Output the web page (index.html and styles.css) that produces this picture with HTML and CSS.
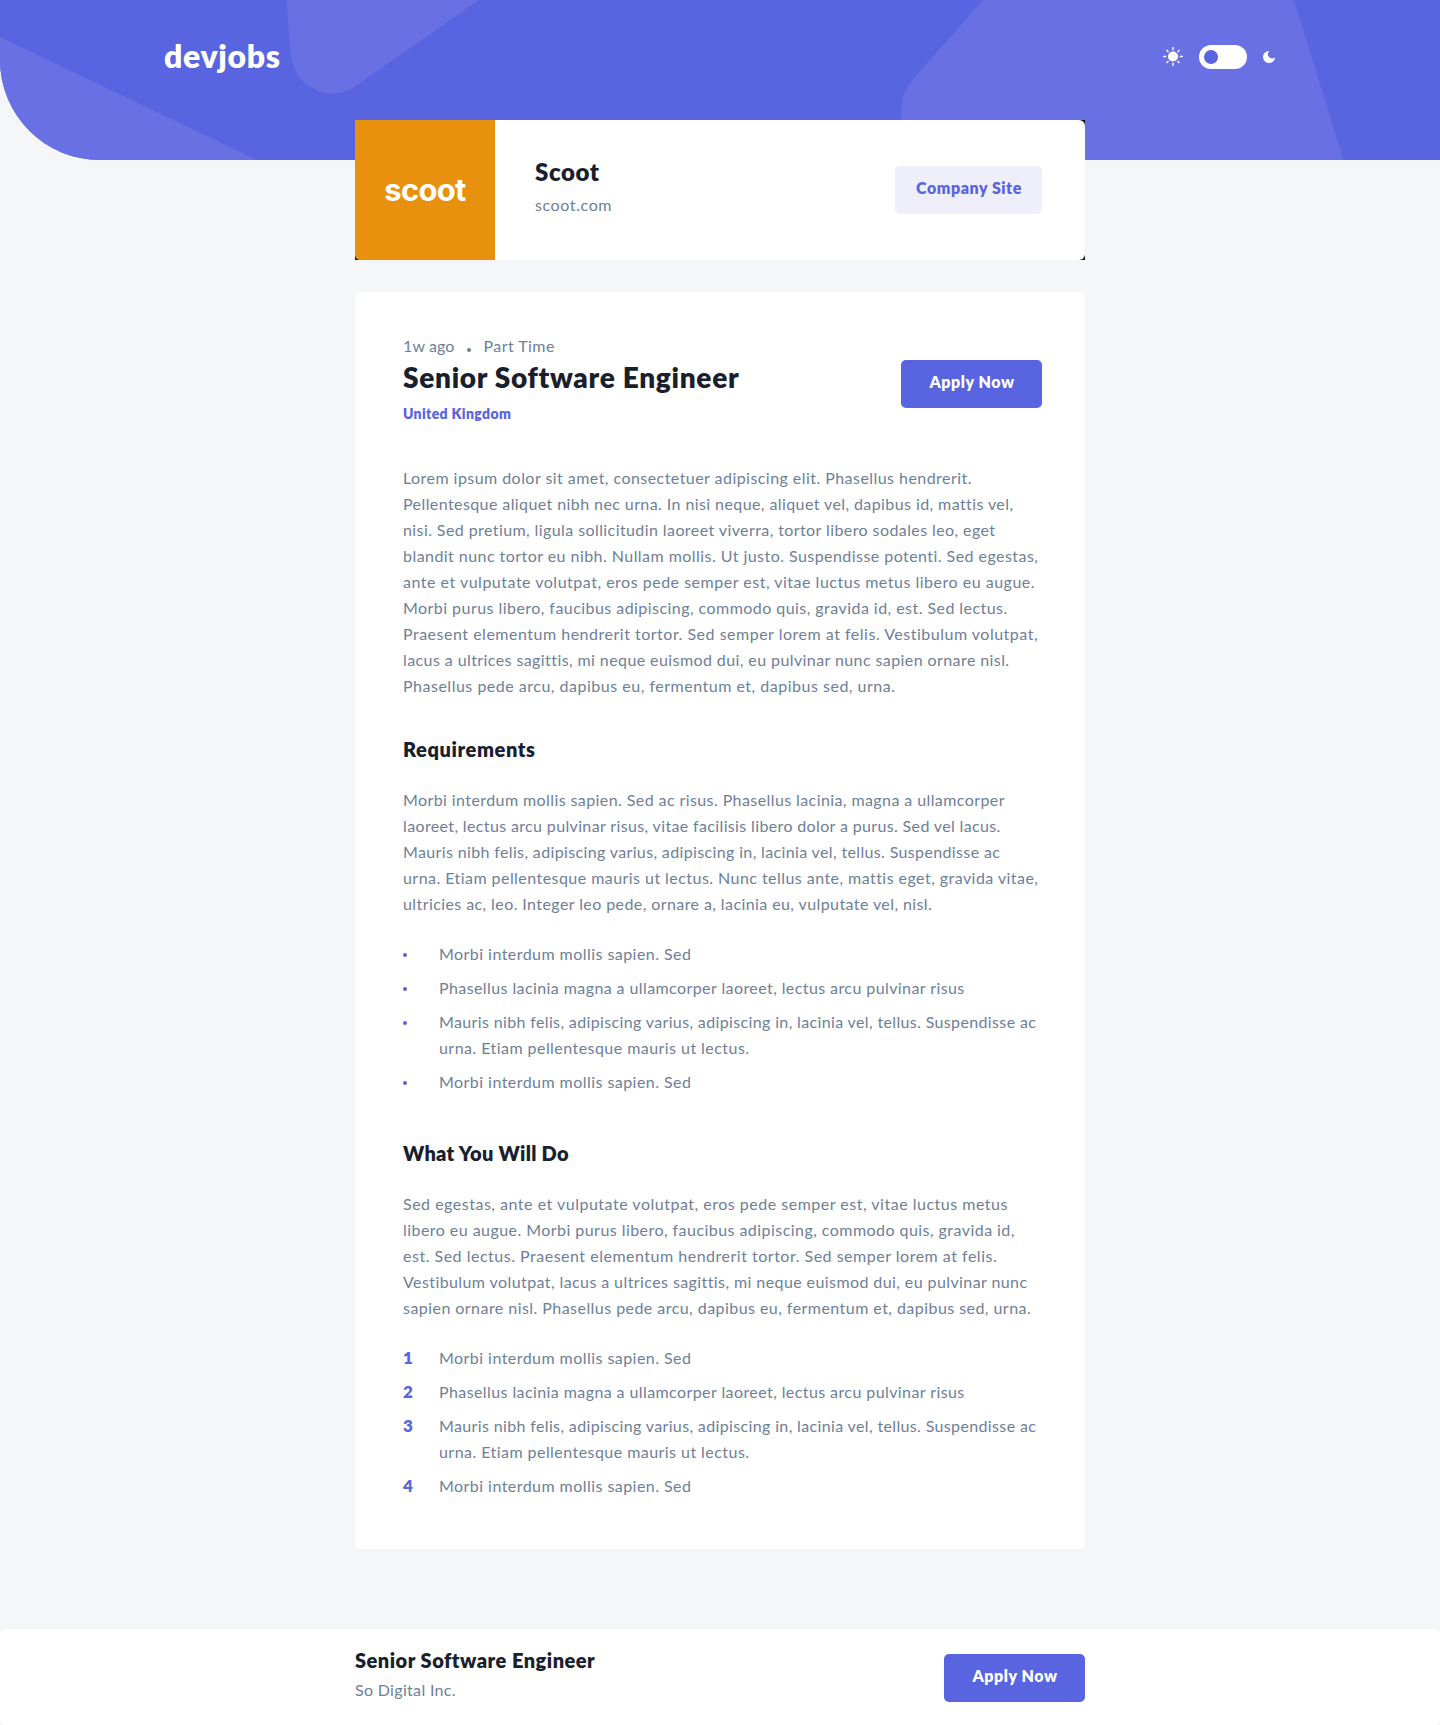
FILE: index.html
```html
<!DOCTYPE html>
<html lang="en">
<head>
<meta charset="utf-8">
<title>devjobs | Senior Software Engineer</title>
<link rel="stylesheet" href="styles.css">
</head>
<body>
<header class="header">
  <svg class="header-pattern" viewBox="0 0 1440 160" aria-hidden="true">
    <g fill="#6970e4">
      <path d="M0 37L257 160H0z"/>
      <path d="M286.500 0H479L355 86.500C335 100 312 92 300 78C291 66 291 56 289.500 41Z"/>
      <path d="M983 0H1294L1343.500 160H930C905 145 899 126 901.500 105C903 92 908 85 914 78Z"/>
    </g>
  </svg>
  <div class="header-inner">
    <a class="logo">devjobs</a>
    <div class="theme">
      <svg class="sun" width="20" height="20" viewBox="0 0 20 20" aria-hidden="true">
        <circle cx="10" cy="9.500" r="5" fill="#fff"/>
        <path d="M10 0v3.200M10 15.800v3.200M.2 9.500h3M16.800 9.500h3M3.500 3l2 2M14.500 14l2 2M3.500 16l2-2M14.500 5l2-2" stroke="#fff" stroke-width="1.400" fill="none"/>
      </svg>
      <span class="toggle"><span class="knob"></span></span>
      <svg class="moon" width="12" height="12" viewBox="0 0 12 12" aria-hidden="true">
        <path d="M6.300 0A4 4 0 1 0 12 6.300A6 6 0 1 1 6.300 0Z" fill="#fff"/>
      </svg>
    </div>
  </div>
</header>

<main class="main">
  <div class="company-frame">
    <section class="company">
      <div class="company-logo"><span>scoot</span></div>
      <div class="company-info">
        <h2>Scoot</h2>
        <p>scoot.com</p>
      </div>
      <a class="btn btn-soft">Company Site</a>
    </section>
  </div>

  <article class="job">
    <div class="job-head">
      <div>
        <p class="meta"><span class="age">1w ago</span><span class="dot"></span><span>Part Time</span></p>
        <h1>Senior Software Engineer</h1>
        <p class="location">United Kingdom</p>
      </div>
      <a class="btn btn-primary">Apply Now</a>
    </div>

    <p class="copy intro">
      <span>Lorem ipsum dolor sit amet, consectetuer adipiscing elit. Phasellus hendrerit.</span>
      <span class="snug">Pellentesque aliquet nibh nec urna. In nisi neque, aliquet vel, dapibus id, mattis vel,</span>
      <span class="snug">nisi. Sed pretium, ligula sollicitudin laoreet viverra, tortor libero sodales leo, eget</span>
      <span>blandit nunc tortor eu nibh. Nullam mollis. Ut justo. Suspendisse potenti. Sed egestas,</span>
      <span class="wide">ante et vulputate volutpat, eros pede semper est, vitae luctus metus libero eu augue.</span>
      <span>Morbi purus libero, faucibus adipiscing, commodo quis, gravida id, est. Sed lectus.</span>
      <span class="wide">Praesent elementum hendrerit tortor. Sed semper lorem at felis. Vestibulum volutpat,</span>
      <span class="snug">lacus a ultrices sagittis, mi neque euismod dui, eu pulvinar nunc sapien ornare nisl.</span>
      <span class="wide">Phasellus pede arcu, dapibus eu, fermentum et, dapibus sed, urna.</span>
    </p>

    <h3>Requirements</h3>
    <p class="copy">
      <span class="snug">Morbi interdum mollis sapien. Sed ac risus. Phasellus lacinia, magna a ullamcorper</span>
      <span class="tight">laoreet, lectus arcu pulvinar risus, vitae facilisis libero dolor a purus. Sed vel lacus.</span>
      <span class="tight">Mauris nibh felis, adipiscing varius, adipiscing in, lacinia vel, tellus. Suspendisse ac</span>
      <span>urna. Etiam pellentesque mauris ut lectus. Nunc tellus ante, mattis eget, gravida vitae,</span>
      <span class="snug">ultricies ac, leo. Integer leo pede, ornare a, lacinia eu, vulputate vel, nisl.</span>
    </p>
    <ul class="list copy">
      <li><i class="bullet"></i><div><span>Morbi interdum mollis sapien. Sed</span></div></li>
      <li><i class="bullet"></i><div><span class="snug">Phasellus lacinia magna a ullamcorper laoreet, lectus arcu pulvinar risus</span></div></li>
      <li><i class="bullet"></i><div><span class="tight">Mauris nibh felis, adipiscing varius, adipiscing in, lacinia vel, tellus. Suspendisse ac</span> <span>urna. Etiam pellentesque mauris ut lectus.</span></div></li>
      <li><i class="bullet"></i><div><span>Morbi interdum mollis sapien. Sed</span></div></li>
    </ul>

    <h3 class="second">What You Will Do</h3>
    <p class="copy duties">
      <span class="wide">Sed egestas, ante et vulputate volutpat, eros pede semper est, vitae luctus metus</span>
      <span>libero eu augue. Morbi purus libero, faucibus adipiscing, commodo quis, gravida id,</span>
      <span class="wide">est. Sed lectus. Praesent elementum hendrerit tortor. Sed semper lorem at felis.</span>
      <span class="snug">Vestibulum volutpat, lacus a ultrices sagittis, mi neque euismod dui, eu pulvinar nunc</span>
      <span>sapien ornare nisl. Phasellus pede arcu, dapibus eu, fermentum et, dapibus sed, urna.</span>
    </p>
    <ol class="list copy">
      <li><b>1</b><div><span>Morbi interdum mollis sapien. Sed</span></div></li>
      <li><b>2</b><div><span class="snug">Phasellus lacinia magna a ullamcorper laoreet, lectus arcu pulvinar risus</span></div></li>
      <li><b>3</b><div><span class="tight">Mauris nibh felis, adipiscing varius, adipiscing in, lacinia vel, tellus. Suspendisse ac</span> <span>urna. Etiam pellentesque mauris ut lectus.</span></div></li>
      <li><b>4</b><div><span>Morbi interdum mollis sapien. Sed</span></div></li>
    </ol>
  </article>
</main>

<footer class="footer">
  <div class="footer-inner">
    <div>
      <h4>Senior Software Engineer</h4>
      <p>So Digital Inc.</p>
    </div>
    <a class="btn btn-primary">Apply Now</a>
  </div>
</footer>
</body>
</html>
```
FILE: styles.css
```css
* { box-sizing: border-box; margin: 0; padding: 0; }

body {
  min-height: 1725px;
  display: flex;
  flex-direction: column;
  background: #f4f6f8;
  color: #6e8098;
  font-family: Lato, "Open Sans", sans-serif;
  font-size: 16px;
  line-height: 26px;
  letter-spacing: 0.45px;
}

h1, h2, h3, h4 { color: #19202d; font-weight: 800; }

/* Header */
.header {
  position: relative;
  height: 160px;
  flex: none;
  background: #5964e0;
  border-bottom-left-radius: 100px;
  overflow: hidden;
}
.header-pattern { position: absolute; inset: 0; width: 1440px; height: 160px; }
.header-inner {
  position: relative;
  display: flex;
  justify-content: space-between;
  width: 1112px;
  margin: 0 auto;
  padding: 37px 0 0;
}
.logo { padding-top: 1px; color: #fff; font-size: 32px; line-height: 36px; font-weight: 800; letter-spacing: 0.63px; }
.theme { display: flex; align-items: center; height: 40px; margin-right: 1px; }
.toggle {
  display: flex;
  align-items: center;
  width: 48px;
  height: 24px;
  margin: 0 16px;
  padding-left: 5px;
  border-radius: 12px;
  background: #fff;
}
.knob { width: 14px; height: 14px; border-radius: 50%; background: #5964e0; }

/* Page column */
.main { width: 730px; margin: -40px auto 0; position: relative; }

.company-frame { background: linear-gradient(90deg, transparent 10px, #121721 10px) top / 100% 10px no-repeat, linear-gradient(#121721, #121721) bottom / 100% 10px no-repeat; }
.company {
  display: flex;
  align-items: center;
  height: 140px;
  padding-right: 43px;
  background: #fff;
  border-radius: 0 6px 6px 6px;
  overflow: hidden;
}
.company-logo {
  display: flex;
  justify-content: center;
  width: 140px;
  height: 140px;
  padding-top: 52px;
  background: #e8910e;
  color: #fff;
  font: 700 31px/36px Inter, sans-serif;
  letter-spacing: -0.7px;
}
.company-info { flex: 1; margin-left: 40px; margin-top: -6px; }
.company-info h2 { font-size: 24px; line-height: 30px; letter-spacing: 0.6px; margin-bottom: 5px; }
.company-info p { letter-spacing: 0.6px; }

/* Buttons */
.btn {
  height: 48px;
  padding: 9px 0 0 1px;
  border-radius: 5px;
  font-weight: 800;
  text-align: center;
  letter-spacing: 0.54px;
}
.btn-primary { width: 141px; background: #5964e0; color: #fff; }
.btn-soft { width: 147px; background: #efeffb; color: #5964e0; }

/* Job details */
.job {
  height: 1257px;
  margin-top: 32px;
  padding: 41px 43px 0 48px;
  background: #fff;
  border-radius: 6px;
}
.job-head { display: flex; justify-content: space-between; }
.job-head .btn { margin-top: 27px; }
.meta { display: flex; align-items: center; }
.age { letter-spacing: 0.1px; }
.dot { width: 4px; height: 4px; margin: 7px 12px 0 13px; border-radius: 50%; background: #6e8098; }
h1 { margin-top: 1px; font-size: 28px; line-height: 34px; letter-spacing: 0.7px; }
.location { margin-top: 11px; color: #5964e0; font-size: 14px; line-height: 18px; font-weight: 800; letter-spacing: 0.36px; }

.copy span { display: block; white-space: nowrap; }
.copy .wide { letter-spacing: 0.507px; }
.copy .snug { letter-spacing: 0.411px; }
.copy .tight { letter-spacing: 0.36px; }

.intro { margin-top: 42px; }
h3 { margin: 37px 0 25px; font-size: 20px; line-height: 26px; letter-spacing: 0.6px; }
h3.second { margin: 45px 0 25px; letter-spacing: 0.3px; }

.list { display: flex; flex-direction: column; gap: 8px; margin-top: 24px; list-style: none; }
.list li { display: grid; grid-template-columns: 36px 1fr; }
.bullet { width: 4px; height: 4px; margin-top: 12px; border-radius: 50%; background: #5964e0; }
.list b { color: #5964e0; font-size: 17px; font-weight: 800; }

/* Sticky apply bar */
.footer { height: 96px; margin-top: auto; background: #fff; border-radius: 6px; }
.footer-inner { display: flex; justify-content: space-between; width: 730px; margin: 0 auto; padding-top: 18px; }
.footer h4 { font-size: 20px; letter-spacing: 0.5px; margin-bottom: 4px; }
.footer p { letter-spacing: 0.32px; }
.footer .btn { margin-top: 7px; }
```
